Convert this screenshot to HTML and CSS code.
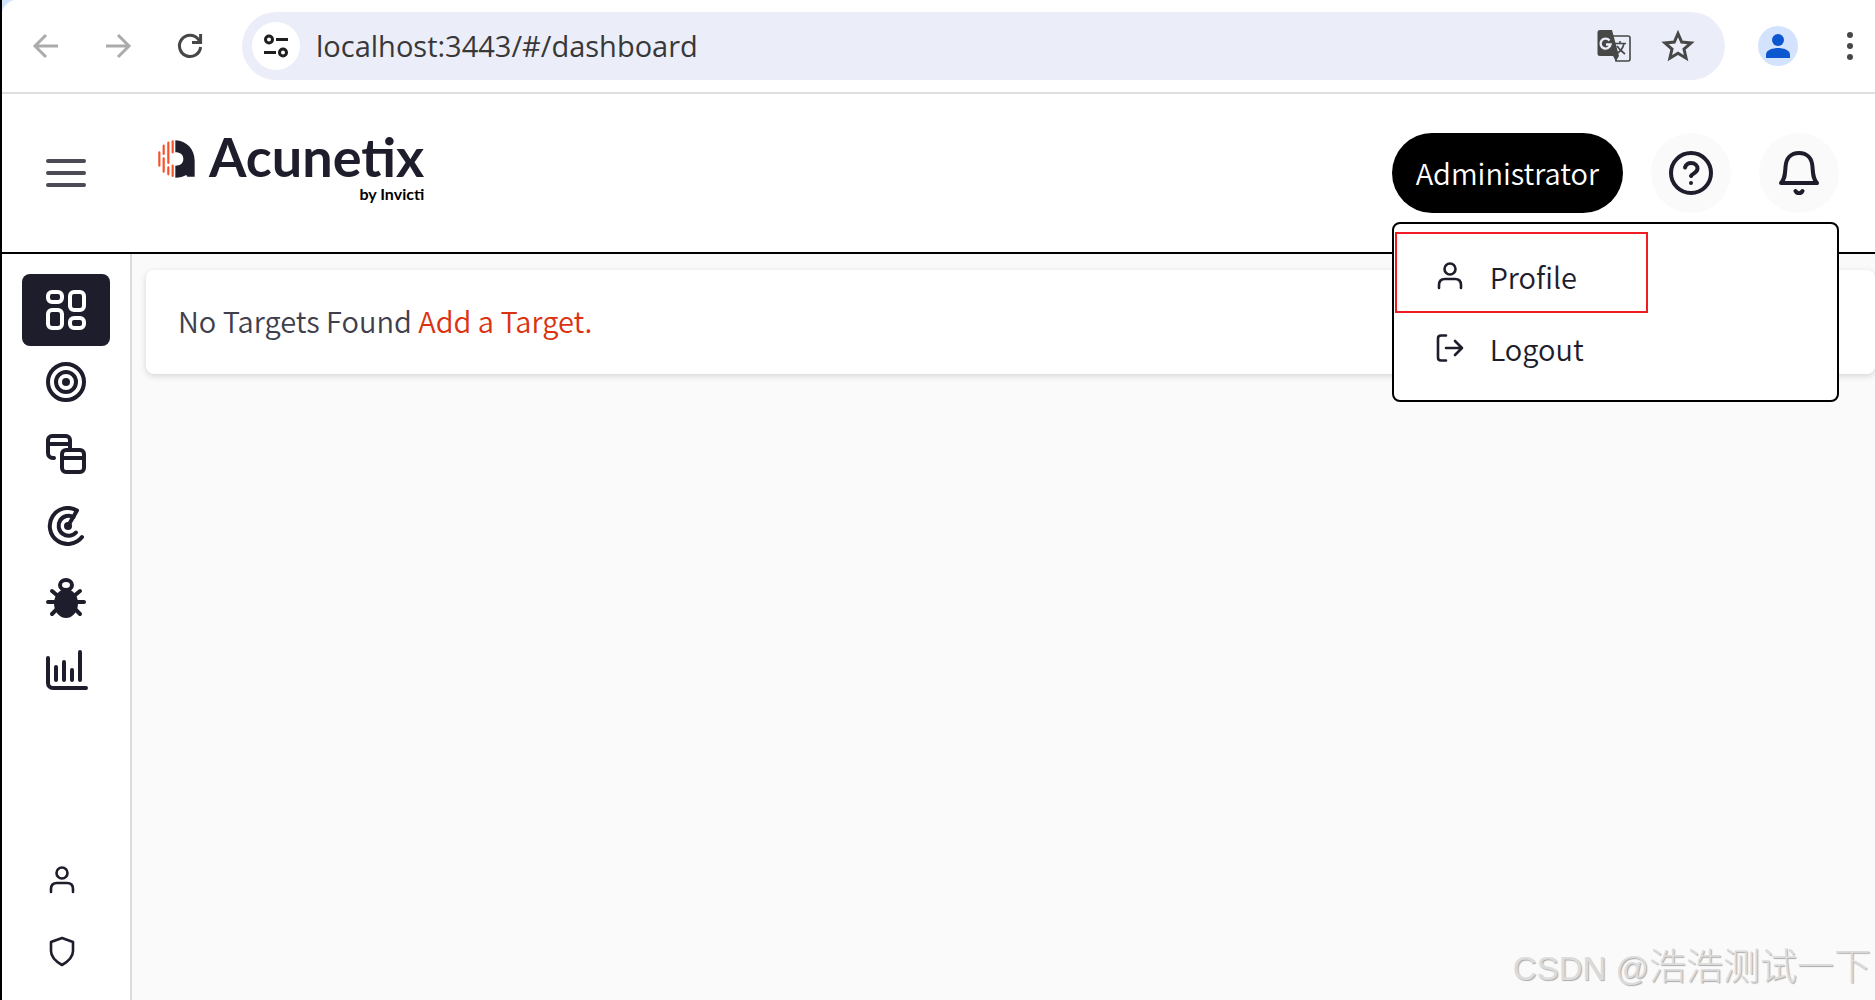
FILE: index.html
```html
<!DOCTYPE html>
<html lang="en">
<head>
  <meta charset="UTF-8">
  <title>Acunetix - Dashboard</title>
  <link rel="stylesheet" href="styles.css">
</head>
<body>

<div class="browser-bar">
  <div class="browser-nav">
    <button class="icon-btn muted" aria-label="Back">
      <svg width="32" height="32" viewBox="0 0 32 32" fill="none" stroke="currentColor" stroke-width="3"><path d="M28 16H6M16 5 5 16l11 11"/></svg>
    </button>
    <button class="icon-btn muted" aria-label="Forward">
      <svg width="32" height="32" viewBox="0 0 32 32" fill="none" stroke="currentColor" stroke-width="3"><path d="M4 16h22M16 5l11 11-11 11"/></svg>
    </button>
    <button class="icon-btn" aria-label="Reload">
      <svg width="32" height="32" viewBox="0 0 32 32" fill="none" stroke="currentColor" stroke-width="3"><path d="M26.600 17A10.600 10.600 0 1 1 24.500 9.500L26 12"/><path d="M26.600 4v8.600H18"/></svg>
    </button>
  </div>

  <div class="address">
    <button class="site-info" aria-label="View site information">
      <svg width="24" height="24" viewBox="0 0 24 24" fill="none" stroke="currentColor" stroke-width="3"><circle cx="5" cy="5.500" r="3.500"/><path d="M12 5.500h12M0 18.500h12"/><circle cx="19" cy="18.500" r="3.500"/></svg>
    </button>
    <input class="url" type="text" aria-label="Address" value="localhost:3443/#/dashboard">
    <button class="icon-btn" aria-label="Translate this page">
      <svg width="34" height="34" viewBox="0 0 34 34"><path d="M14 7h17a2 2 0 0 1 2 2v21a2 2 0 0 1-2 2H19L14 7z" fill="none" stroke="currentColor" stroke-width="1.600"/><path d="M3 1h12l7 26-3 5-3-5H3a2.500 2.500 0 0 1-2.500-2.500v-21A2.500 2.500 0 0 1 3 1z" fill="currentColor"/><path d="M12.500 11.500a5 5 0 1 0 1 4H9" fill="none" stroke="#ebeef8" stroke-width="2.400"/><path d="M18 14.500h11M23 12v2.500M27 14.500c-1 5-4 8-7 10M20 17c2 3 4 5 8 8" fill="none" stroke="currentColor" stroke-width="1.600"/></svg>
    </button>
    <button class="icon-btn" aria-label="Bookmark this page">
      <svg width="34" height="34" viewBox="0 0 34 34" fill="none" stroke="currentColor" stroke-width="3"><path d="M17 4.500l3.700 8.600 9.300.8-7 6.100 2.100 9.200-8.100-4.900-8.100 4.900L11 20l-7-6.100 9.300-.8z"/></svg>
    </button>
  </div>

  <button class="avatar" aria-label="You">
    <svg width="24" height="24" viewBox="0 0 24 24" fill="currentColor"><circle cx="12" cy="6" r="6"/><path d="M0 24v-3.500C0 16 7 14 12 14s12 2 12 6.500V24z"/></svg>
  </button>
  <button class="icon-btn" aria-label="Browser menu">
    <svg width="32" height="32" viewBox="0 0 32 32" fill="currentColor"><circle cx="16" cy="5" r="3"/><circle cx="16" cy="16" r="3"/><circle cx="16" cy="27" r="3"/></svg>
  </button>
</div>

<header class="header">
  <button class="menu-toggle" aria-label="Toggle menu">
    <svg width="40" height="28" viewBox="0 0 40 28" stroke="currentColor" stroke-width="4" stroke-linecap="round"><path d="M2 2h36M2 14h36M2 26h36"/></svg>
  </button>

  <a class="logo" href="#/dashboard">
    <svg class="logo-mark" width="37" height="38" viewBox="473 91 111 114">
      <g stroke="#f5512b" stroke-width="6.500" stroke-linecap="round"><path d="M477 128v40M490 108v25M490 146v40M504 99v61M504 173v21M517 95v33M517 168v31"/></g>
      <path d="M525 92c34 2 58 26 58 62v47h-22l-3-5c-8 5-20 8-33 8v-36c15 0 24-7 24-20s-9-20-24-20z" fill="#1e1d2b"/>
    </svg>
    <span class="logo-text">
      <span class="logo-name">Acunetix</span>
      <span class="logo-by">by Invicti</span>
    </span>
  </a>

  <div class="header-actions">
    <button class="user-btn">Administrator</button>
    <button class="round-btn" aria-label="Help">
      <svg width="44" height="44" viewBox="0 0 44 44" fill="none" stroke="currentColor" stroke-width="4" stroke-linecap="round" stroke-linejoin="round"><circle cx="22" cy="22" r="20"/><path d="M16 16.500c1-3 3-4.500 6-4.500 4 0 6.500 2.500 6.500 5.500 0 4.500-5 4.500-6.500 7.500"/><path d="M22 32v.01"/></svg>
    </button>
    <button class="round-btn" aria-label="Notifications">
      <svg width="44" height="44" viewBox="0 0 44 44" fill="none" stroke="currentColor" stroke-width="4" stroke-linecap="round" stroke-linejoin="round"><path d="M4 32c4-4 4-9 4.500-16C9 7 14 2 22 2s13 5 13.500 14c.5 7 .5 12 4.500 16z"/><path d="M18.500 40c1.500 3 5.500 3 7 0"/></svg>
    </button>

    <nav class="user-menu" aria-label="User menu">
      <a href="#/profile">
        <svg width="32" height="32" viewBox="0 0 32 32" fill="none" stroke="currentColor" stroke-width="2.600" stroke-linecap="round"><circle cx="16" cy="9" r="5.500"/><path d="M5 28v-3c0-4 2-6 6-6h10c4 0 6 2 6 6v3"/></svg>
        Profile
      </a>
      <a href="#/logout">
        <svg width="32" height="32" viewBox="0 0 32 32" fill="none" stroke="currentColor" stroke-width="2.600" stroke-linecap="round" stroke-linejoin="round"><path d="M12 3.500H7c-2 0-3 1-3 3v19c0 2 1 3 3 3h5M12 16h16M21 9l7 7-7 7"/></svg>
        Logout
      </a>
      <span class="highlight"></span>
    </nav>
  </div>
</header>

<div class="layout">
  <aside class="sidebar">
    <nav class="side-nav" aria-label="Main">
      <a class="active" href="#/dashboard" aria-label="Dashboard">
        <svg width="40" height="40" viewBox="0 0 40 40" fill="none" stroke="currentColor" stroke-width="4"><rect x="2" y="2" width="14" height="10" rx="4"/><rect x="24" y="2" width="14" height="18" rx="4"/><rect x="2" y="20" width="14" height="18" rx="4"/><rect x="24" y="28" width="14" height="10" rx="4"/></svg>
      </a>
      <a href="#/targets" aria-label="Targets">
        <svg width="40" height="40" viewBox="0 0 40 40" fill="none" stroke="currentColor" stroke-width="4"><circle cx="20" cy="20" r="18"/><circle cx="20" cy="20" r="10"/><circle cx="20" cy="20" r="4" fill="currentColor" stroke="none"/></svg>
      </a>
      <a href="#/discovery" aria-label="Discovery">
        <svg width="40" height="40" viewBox="0 0 40 40" fill="none" stroke="currentColor" stroke-width="4" stroke-linecap="round"><path d="M8 24H7c-3 0-5-2-5-5V6c0-2 2-4 4-4h14c2 0 4 2 4 4v8M3 10h20"/><rect x="16" y="16" width="22" height="22" rx="4"/><path d="M17 24h20"/></svg>
      </a>
      <a href="#/scans" aria-label="Scans">
        <svg width="40" height="40" viewBox="0 0 40 40" fill="none" stroke="currentColor" stroke-width="4" stroke-linecap="round" stroke-linejoin="round"><path d="M36 31A18 18 0 1 1 31 4.500L22 20"/><path d="M27.500 11A10 10 0 1 0 30 26.500"/><circle cx="22" cy="20" r="4" fill="currentColor" stroke="none"/></svg>
      </a>
      <a href="#/vulnerabilities" aria-label="Vulnerabilities">
        <svg width="40" height="40" viewBox="0 0 40 40" fill="none" stroke="currentColor" stroke-width="4" stroke-linecap="round"><ellipse cx="20" cy="7" rx="6" ry="5"/><ellipse cx="20" cy="25.500" rx="12" ry="14.500" fill="currentColor" stroke="none"/><path d="M2 24h36M6 13l6 5M34 13l-6 5M6 36l5-5M34 36l-5-5"/></svg>
      </a>
      <a href="#/reports" aria-label="Reports">
        <svg width="44" height="40" viewBox="-2 0 44 40" fill="none" stroke="currentColor" stroke-width="4" stroke-linecap="round"><path d="M2 8v25c0 3 2 5 5 5h33M10 17v13M18 12v18M26 20v10M34 2v28"/></svg>
      </a>
    </nav>
    <nav class="side-nav small" aria-label="Account">
      <a href="#/users" aria-label="Users">
        <svg width="32" height="32" viewBox="0 0 32 32" fill="none" stroke="currentColor" stroke-width="2.600" stroke-linecap="round"><circle cx="16" cy="9" r="5.500"/><path d="M5 28v-3c0-4 2-6 6-6h10c4 0 6 2 6 6v3"/></svg>
      </a>
      <a href="#/settings" aria-label="Settings">
        <svg width="32" height="32" viewBox="0 0 32 32" fill="none" stroke="currentColor" stroke-width="2.600" stroke-linejoin="round"><path d="M16 2l11 4v9c0 6-4 10-11 14C9 25 5 21 5 15V6z"/></svg>
      </a>
    </nav>
  </aside>

  <main class="content">
    <div class="card">No Targets Found <a href="#/targets/add">Add a Target.</a></div>
  </main>
</div>

<div class="watermark"><span class="latin">CSDN @</span>浩浩测试一下</div>

</body>
</html>
```

FILE: styles.css
```css
* {
  box-sizing: border-box;
}
body {
  margin: 0;
  min-height: 100vh;
  display: flex;
  flex-direction: column;
  border-left: 2px solid #000;
  background: #fafafa;
  color: #1e1d2b;
  font-family: "Noto Sans CJK SC", "Open Sans", sans-serif;
  font-size: 29px;
  font-weight: 350;
  line-height: 40px;
}
button {
  padding: 0;
  border: none;
  background: none;
  color: inherit;
  font: inherit;
  cursor: pointer;
}
a {
  color: inherit;
  text-decoration: none;
}
svg {
  display: block;
  flex: none;
}

/* browser toolbar */
.browser-bar {
  display: flex;
  align-items: center;
  padding: 12px 9px 12px 28px;
  border-bottom: 2px solid #dedede;
  background: radial-gradient(circle at 16px 16px, #fff 16px, #d3e3fd 17px) 0 0 / 16px 16px no-repeat #fff;
  color: #474747;
}
.browser-nav {
  display: flex;
  gap: 40px;
}
.muted {
  color: #ababab;
}
.address {
  flex: 1;
  display: flex;
  align-items: center;
  gap: 30px;
  height: 68px;
  margin: 0 33px 0 36px;
  padding: 0 30px 0 10px;
  border-radius: 34px;
  background: #ebeef8;
}
.site-info {
  display: flex;
  align-items: center;
  justify-content: center;
  width: 48px;
  height: 48px;
  border-radius: 50%;
  background: #fff;
  color: #1f1f1f;
}
.url {
  flex: 1;
  min-width: 0;
  margin-left: -14px;
  padding: 0 0 2px;
  border: none;
  outline: none;
  background: none;
  color: #383838;
  font-family: "Open Sans", "Noto Sans", sans-serif;
  font-size: 29px;
}
.avatar {
  display: flex;
  align-items: center;
  justify-content: center;
  width: 40px;
  height: 40px;
  margin-right: 36px;
  border-radius: 50%;
  background: #d3e3fd;
  color: #0b57d0;
}

/* app header */
.header {
  display: flex;
  align-items: center;
  height: 160px;
  padding: 0 36px 0 44px;
  border-bottom: 2px solid #000;
  background: #fff;
}
.menu-toggle {
  color: #4b4a55;
}
.logo {
  display: flex;
  align-items: flex-start;
  gap: 14px;
  margin-left: 72px;
  padding-bottom: 12px;
}
.logo-mark {
  margin-top: 10px;
}
.logo-text {
  display: flex;
  flex-direction: column;
  align-items: flex-end;
  font-family: Lato, sans-serif;
  font-weight: 700;
}
.logo-name {
  font-size: 54px;
  line-height: 54px;
}
.logo-by {
  color: #000;
  font-size: 16px;
  line-height: 20px;
}
.header-actions {
  position: relative;
  display: flex;
  gap: 28px;
  margin-left: auto;
}
.user-btn {
  height: 80px;
  padding: 0 24px 2px;
  border-radius: 40px;
  background: #000;
  color: #fff;
}
.round-btn {
  display: flex;
  align-items: center;
  justify-content: center;
  width: 80px;
  height: 80px;
  border-radius: 50%;
  background: #fafafa;
}
.user-menu {
  position: absolute;
  top: 89px;
  left: 0;
  right: 0;
  padding: 16px 0;
  border: 2px solid #000;
  border-radius: 8px;
  background: #fff;
}
.user-menu a {
  display: flex;
  align-items: center;
  gap: 24px;
  height: 72px;
  padding-left: 40px;
}
.highlight {
  position: absolute;
  top: 8px;
  left: 1px;
  width: 253px;
  height: 81px;
  border: 2px solid #f01c24;
  pointer-events: none;
}

/* page */
.layout {
  flex: 1;
  display: flex;
}
.sidebar {
  display: flex;
  flex-direction: column;
  justify-content: space-between;
  padding: 20px 20px 12px;
  border-right: 2px solid #dbdbdb;
  background: #fff;
}
.side-nav a {
  display: flex;
  align-items: center;
  justify-content: center;
  width: 88px;
  height: 72px;
  border-radius: 8px;
}
.side-nav .active {
  background: #1e1d2b;
  color: #fff;
}
.small a {
  width: 80px;
}
.content {
  flex: 1;
  padding: 16px 0 0 14px;
}
.card {
  padding: 30px 32px 34px;
  border-radius: 8px;
  background: #fff;
  box-shadow: 0 2px 6px rgba(0, 0, 0, 0.15);
  color: #40404d;
}
.card a {
  color: #db3310;
}

.watermark {
  position: absolute;
  right: 4px;
  bottom: 7px;
  color: #dcdcdc;
  font-family: "Noto Sans CJK SC", sans-serif;
  font-size: 37px;
  font-weight: 300;
  line-height: 48px;
  text-shadow: 1px 1px 1px #aaa;
}
.latin {
  font-family: "Liberation Sans", sans-serif;
  font-size: 33px;
}
```
